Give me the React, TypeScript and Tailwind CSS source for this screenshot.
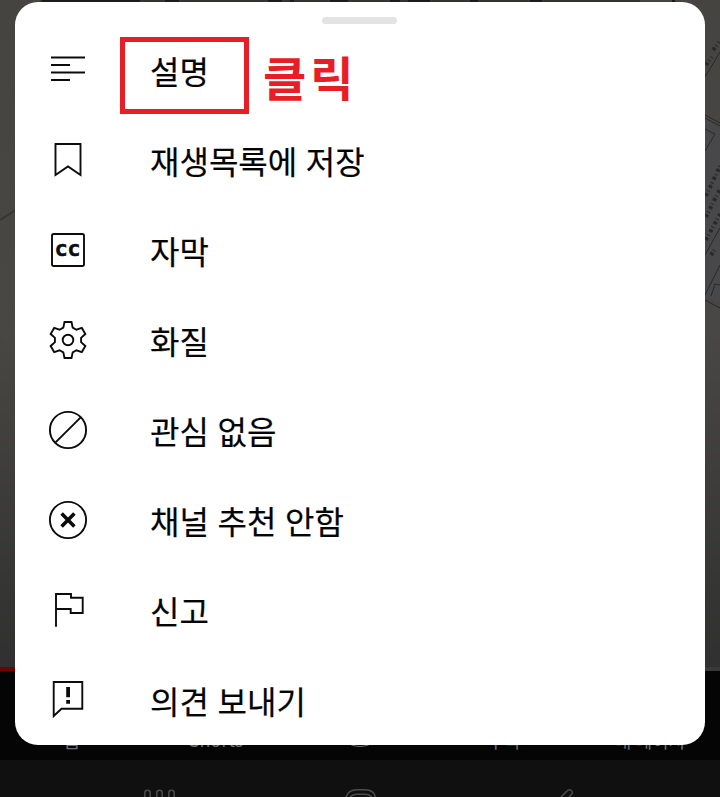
import type { ReactNode } from "react";

type MenuItem = {
  label: string;
  icon: ReactNode;
  boxed?: boolean;
};

const GEAR_POINTS = [0, 60, 120, 180, 240, 300]
  .flatMap((angle) => {
    const rad = (angle * Math.PI) / 180;
    const tooth = [
      [-4.7, -12.4],
      [-3.5, -18],
      [3.5, -18],
      [4.7, -12.4],
    ];
    return tooth.map(
      ([x, y]) =>
        `${24 + x * Math.cos(rad) - y * Math.sin(rad)},${24 + x * Math.sin(rad) + y * Math.cos(rad)}`
    );
  })
  .join(" ");

function Icon({ children }: { children: ReactNode }) {
  return (
    <svg
      className="size-12 shrink-0"
      viewBox="0 0 48 48"
      fill="none"
      stroke="#0c0c0c"
      strokeWidth="1.9"
    >
      {children}
    </svg>
  );
}

const items: MenuItem[] = [
  {
    label: "설명",
    boxed: true,
    icon: <path d="M7 11.5h34M7 19h19M7 26.5h34M7 34h19" />,
  },
  {
    label: "재생목록에 저장",
    icon: <path d="M11.5 8h25v31L24 30.5 11.5 39z" />,
  },
  {
    label: "자막",
    icon: (
      <>
        <rect x="8" y="8" width="32" height="32" rx="1.8" />
        <text
          x="11.8 24.6"
          y="29.5"
          fill="#0c0c0c"
          stroke="#0c0c0c"
          strokeWidth="0.7"
          className="font-['DejaVu_Sans',sans-serif] text-[15px] font-bold"
        >
          CC
        </text>
      </>
    ),
  },
  {
    label: "화질",
    icon: (
      <>
        <polygon points={GEAR_POINTS} />
        <circle cx="24" cy="24" r="5.3" />
      </>
    ),
  },
  {
    label: "관심 없음",
    icon: (
      <>
        <circle cx="24" cy="24" r="18.1" />
        <path d="M11.3 36.7 36.7 11.3" />
      </>
    ),
  },
  {
    label: "채널 추천 안함",
    icon: (
      <>
        <circle cx="24" cy="24" r="18.1" />
        <path d="m17.6 17.6 12.8 12.8M30.4 17.6 17.6 30.4" strokeWidth="3.6" />
      </>
    ),
  },
  {
    label: "신고",
    icon: <path d="M12 40.7V8h15v3.7h11.7V27h-12v-4H12" />,
  },
  {
    label: "의견 보내기",
    icon: (
      <>
        <path d="M9.7 6h28.6v26.7H17.5L9.7 40z" />
        <path d="M24.1 11v10.2M24.1 24v3.7" strokeWidth="3.8" />
      </>
    ),
  },
];

// Dimmed video page behind the sheet
function Backdrop() {
  return (
    <div className="flex h-full flex-col">
      <div className="relative h-[667px] bg-linear-to-b from-[#454440] via-[#484743] to-[#303030]">
        <svg
          className="absolute top-0 right-0 h-[330px] w-[100px]"
          viewBox="620 0 100 330"
          fill="none"
          stroke="#292929"
        >
          <path d="M705 116l15 8v180l-15-8z" fill="#48474a" stroke="none" />
          <path d="M705 77l15-25M705 115l15 8M705 118l15 8M705 129l10 5-10 17M705 255l15-27M705 295l15-30M705 300l15 8" />
          <path
            d="M706 65l6-8M713 50l6-8M706 196l14-30M706 217l14-28M706 240l14-26M711 255l5-7"
            strokeWidth="4"
            strokeDasharray="3 2 1 3"
          />
          <path d="M711 296l4-12 5 1" />
        </svg>
        <svg
          className="absolute top-0 left-0 h-[2px] w-[720px]"
          viewBox="0 0 720 2"
          stroke="#1c1c1c"
          strokeWidth="2"
        >
          <path d="M40 1h600" stroke="#333332" />
          <path d="M42 1h98M165 1h14M268 1h14M290 1h4M330 1h18M390 1h10M408 1h22M470 1h8M530 1h12M672 1h3" />
        </svg>
        {/* crease in the paper */}
        <svg
          className="absolute top-[205px] left-0 h-5 w-4"
          viewBox="0 0 16 20"
          stroke="#343431"
          strokeWidth="1.5"
        >
          <path d="M0 15 16 5" />
        </svg>
      </div>
      <div className="flex h-1">
        <div className="w-1/2 bg-[#720000]" />
        <div className="w-1/2 bg-[#393939]" />
      </div>
      <div className="grid h-[89px] grid-cols-5 items-end bg-[#050505] pb-[10px] text-center font-['Noto_Sans_CJK_KR',sans-serif] text-[18px] leading-5 text-[#707070]">
        <span>홈</span>
        <span className="pb-px">Shorts</span>
        <span className="mx-auto mb-[3px] size-12 rounded-full border border-[#707070]" />
        <span>구독</span>
        <span className="pl-1">내 페이지</span>
      </div>
      <div className="flex-1 bg-[#101010]">
        <svg
          className="h-[37px] w-full"
          viewBox="0 760 720 37"
          fill="none"
          stroke="#4c4c4c"
          strokeWidth="1.5"
        >
          <path d="M144.8 797v-4a2.7 2.7 0 0 1 5.4 0v4M156.8 797v-4a2.7 2.7 0 0 1 5.4 0v4M168.8 797v-4a2.7 2.7 0 0 1 5.4 0v4" />
          <path d="M346 797c1.5-5 6-7.3 11-7.3h8c5 0 9.500 2.300 10.500 7.300M350 797c2-2 4-2.700 7-2.700h8c3 0 5 .7 7 2.700" />
          <path d="m561 797 6-6c3-3 7 .5 4.500 3.500l-2.500 2.500" />
        </svg>
      </div>
    </div>
  );
}

function MenuRow({ label, icon, boxed }: MenuItem) {
  return (
    <li className="flex h-[90px] items-center">
      <Icon>{icon}</Icon>
      <div className="relative ml-[58px] font-['Noto_Sans_CJK_KR',sans-serif] text-[32px] leading-[46px] whitespace-nowrap text-[#050505]">
        <span className="[word-spacing:1.5px] [-webkit-text-stroke:0.2px_#050505]">
          {label}
        </span>
        {boxed && (
          <>
            <span className="absolute -top-[10px] -left-[30px] h-[77px] w-[129px] border-5 border-[#e91d25]" />
            <span className="absolute top-[5px] left-[113px] text-[47px] leading-[48px] font-bold tracking-[4px] text-[#e91d25]">
              클릭
            </span>
          </>
        )}
      </div>
    </li>
  );
}

export default function App() {
  return (
    <main className="relative h-[797px] w-[720px] overflow-hidden bg-[#101010]">
      <Backdrop />
      <section className="absolute top-[2px] left-[15px] h-[743px] w-[690px] overflow-hidden rounded-[23px] bg-white">
        <div className="flex h-[23px] pt-[15px] pl-[307px]">
          <div className="h-[7px] w-[75px] rounded-full bg-[#e3e3e3]" />
        </div>
        <ul className="pl-[29px]">
          {items.map((item) => (
            <MenuRow key={item.label} {...item} />
          ))}
        </ul>
      </section>
    </main>
  );
}
